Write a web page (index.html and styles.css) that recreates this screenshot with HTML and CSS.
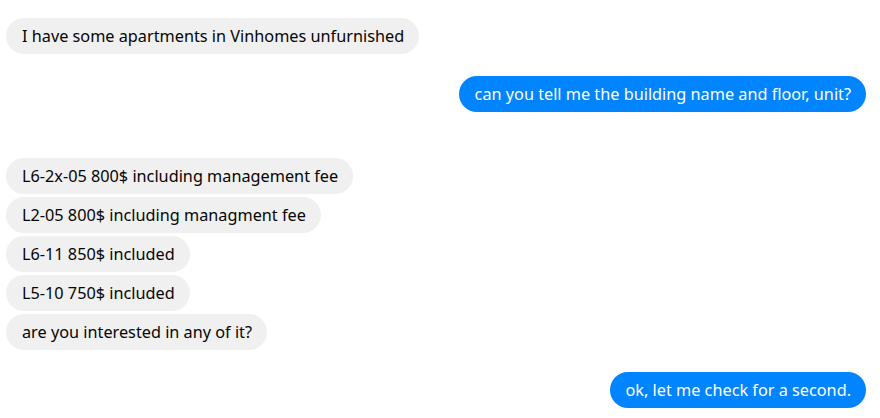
FILE: index.html
```html
<!DOCTYPE html>
<html lang="en">

<head>
  <meta charset="UTF-8">
  <meta name="viewport" content="width=device-width, initial-scale=1.0">
  <title>Chat</title>
  <link rel="stylesheet" href="styles.css">
</head>

<body>
  <div class="chat">
    <div class="group them">
      <div class="bubble">I have some apartments in Vinhomes unfurnished</div>
    </div>
    <div class="group me">
      <div class="bubble">can you tell me the building name and floor, unit?</div>
    </div>
    <div class="group them wide">
      <div class="bubble">L6-2x-05 800$ including management fee</div>
      <div class="bubble">L2-05 800$ including managment fee</div>
      <div class="bubble">L6-11 850$ included</div>
      <div class="bubble">L5-10 750$ included</div>
      <div class="bubble">are you interested in any of it?</div>
    </div>
    <div class="group me">
      <div class="bubble">ok, let me check for a second.</div>
    </div>
  </div>
</body>

</html>
```

FILE: styles.css
```css
body {
  margin: 0;
  background: #fff;
  font-family: "Noto Sans", "Open Sans", sans-serif;
}

.chat {
  display: flex;
  flex-direction: column;
  padding: 18px 14px 0 6px;
  gap: 22px;
}

.group {
  display: flex;
  flex-direction: column;
  gap: 3px;
}

.group.wide {
  margin-top: 24px;
}

.them {
  align-items: flex-start;
}

.me {
  align-items: flex-end;
}

.bubble {
  height: 36px;
  line-height: 36px;
  padding: 0 15px 0 16px;
  border-radius: 18px;
  font-size: 16.25px;
  white-space: nowrap;
}

.them .bubble {
  background: #f0f0f0;
  color: #050505;
}

.me .bubble {
  background: #0084ff;
  color: #fff;
}
```
